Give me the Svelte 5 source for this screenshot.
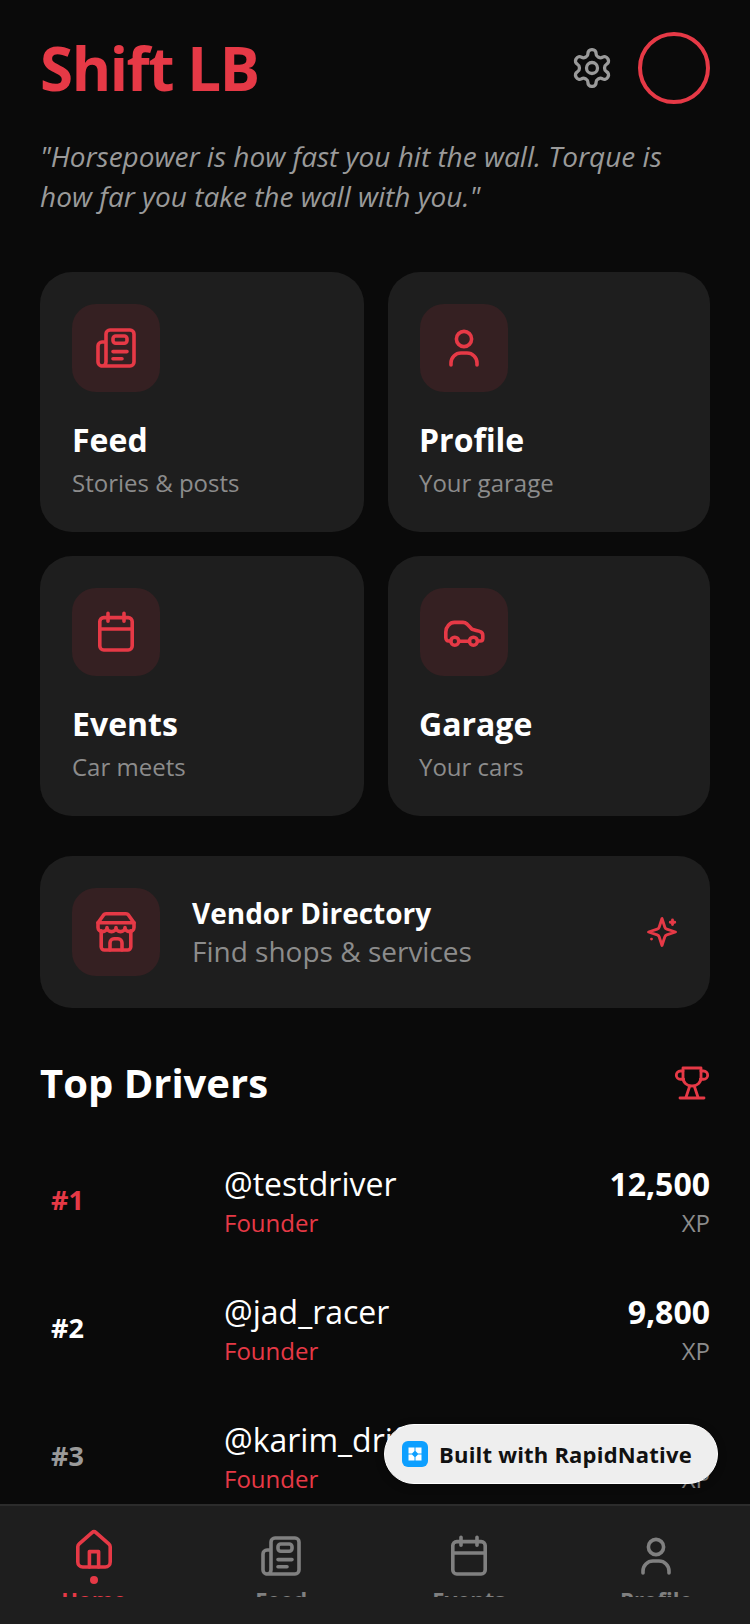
<script>
  const cards = [
    { title: 'Feed', sub: 'Stories & posts', icon: 'news' },
    { title: 'Profile', sub: 'Your garage', icon: 'user' },
    { title: 'Events', sub: 'Car meets', icon: 'cal' },
    { title: 'Garage', sub: 'Your cars', icon: 'car' }
  ];
  const drivers = [
    { rank: '#1', name: '@testdriver', xp: '12,500', cls: 'first' },
    { rank: '#2', name: '@jad_racer', xp: '9,800', cls: 'second' },
    { rank: '#3', name: '@karim_drift', xp: '7,650', cls: 'third' }
  ];
  const tabs = [
    { label: 'Home', icon: 'home', active: true },
    { label: 'Feed', icon: 'news' },
    { label: 'Events', icon: 'cal' },
    { label: 'Profile', icon: 'user' }
  ];
</script>

{#snippet glyph(name)}
  <svg class="ico" viewBox="0 0 24 24" fill="none" stroke="currentColor" stroke-width="1.8" stroke-linecap="round" stroke-linejoin="round">
    {#if name === 'news'}
      <path d="M4.5 21H19a2 2 0 0 0 2-2V5a2 2 0 0 0-2-2H9a2 2 0 0 0-2 2v14a2 2 0 0 1-2 2 2 2 0 0 1-2-2v-8a2 2 0 0 1 2-2h2" />
      <rect x="10.5" y="6" width="7" height="3.6" rx="1.4" />
      <path d="M10.5 13.8h7M10.5 17.4h4.5" />
    {:else if name === 'user'}
      <circle cx="12" cy="7.5" r="3.8" />
      <path d="M5.500 20.500v-1a5 5 0 0 1 5-5h3a5 5 0 0 1 5 5v1" />
    {:else if name === 'cal'}
      <rect x="3.900" y="4.800" width="16.200" height="16.200" rx="2" />
      <path d="M3.900 10.500h16.200M8 2.600v4M16 2.600v4" />
    {:else if name === 'car'}
      <path d="M19 16.500h1.200c.8 0 1.200-.5 1.200-1.200v-1.600c0-1-.6-1.800-1.500-2C18.300 11.200 16 10.600 16 10.600s-1.500-1.600-2.500-2.600c-.6-.5-1.200-.8-2-.8H7.200C5 7.200 2.900 9.400 2.900 12v2.800c0 1 .6 1.700 1.400 1.700H5.400" />
      <circle cx="7.400" cy="16.600" r="2" />
      <path d="M9.400 16.600h5.300" />
      <circle cx="16.700" cy="16.600" r="2" />
    {:else if name === 'store'}
      <path d="M7 2.900h10c.6 0 1 .3 1.300.7L21 7.400v2.400a2.250 2 0 0 1-4.500 0 2.250 2 0 0 1-4.500 0 2.250 2 0 0 1-4.500 0 2.250 2 0 0 1-4.500 0V7.400l2.700-3.800c.3-.4.7-.7 1.300-.7z" />
      <path d="M3 7.400h18" />
      <path d="M4.600 11.400V19.500A1.600 1.600 0 0 0 6.200 21h11.600a1.600 1.600 0 0 0 1.600-1.500v-8.100" />
      <path d="M9 21v-3.600a2 2 0 0 1 2-2h2a2 2 0 0 1 2 2V21" />
    {:else if name === 'home'}
      <path d="M4.600 8.900 11 3.300a1.500 1.500 0 0 1 2 0l6.400 5.600a2 2 0 0 1 .7 1.500V18a2.500 2.500 0 0 1-2.500 2.500H6.400A2.500 2.500 0 0 1 3.900 18v-7.600a2 2 0 0 1 .7-1.500z" />
      <path d="M9.700 20.500V12.800h4.600v7.700" />
    {/if}
  </svg>
{/snippet}

<div class="screen">
  <main class="scroll">
    <header class="top">
      <h1>Shift LB</h1>
      <div class="top-actions">
        <svg class="gear" viewBox="0 0 24 24" fill="none" stroke="currentColor" stroke-width="1.8" stroke-linecap="round" stroke-linejoin="round">
          <path d="M12.220 2h-.44a2 2 0 0 0-2 2v.18a2 2 0 0 1-1 1.730l-.43.25a2 2 0 0 1-2 0l-.15-.08a2 2 0 0 0-2.730.73l-.22.38a2 2 0 0 0 .73 2.730l.15.1a2 2 0 0 1 1 1.720v.51a2 2 0 0 1-1 1.740l-.15.09a2 2 0 0 0-.73 2.730l.22.38a2 2 0 0 0 2.730.73l.15-.08a2 2 0 0 1 2 0l.43.25a2 2 0 0 1 1 1.730V20a2 2 0 0 0 2 2h.44a2 2 0 0 0 2-2v-.18a2 2 0 0 1 1-1.730l.43-.25a2 2 0 0 1 2 0l.15.08a2 2 0 0 0 2.730-.73l.22-.39a2 2 0 0 0-.73-2.730l-.15-.08a2 2 0 0 1-1-1.740v-.5a2 2 0 0 1 1-1.740l.15-.09a2 2 0 0 0 .73-2.730l-.22-.38a2 2 0 0 0-2.730-.73l-.15.08a2 2 0 0 1-2 0l-.43-.25a2 2 0 0 1-1-1.730V4a2 2 0 0 0-2-2z" />
          <circle cx="12" cy="12" r="3" />
        </svg>
        <div class="avatar"></div>
      </div>
    </header>

    <p class="quote">"Horsepower is how fast you hit the wall. Torque is how far you take the wall with you."</p>

    <section class="grid">
      {#each cards as c}
        <article class="card">
          <div class="tile">{@render glyph(c.icon)}</div>
          <h2>{c.title}</h2>
          <p>{c.sub}</p>
        </article>
      {/each}
    </section>

    <section class="vendor">
      <div class="tile">{@render glyph('store')}</div>
      <div class="vendor-text">
        <h3>Vendor Directory</h3>
        <p>Find shops &amp; services</p>
      </div>
      <svg class="spark" viewBox="0 0 24 24" fill="none" stroke="currentColor" stroke-width="1.9" stroke-linecap="round" stroke-linejoin="round">
        <path d="m12 3-1.900 5.800a2 2 0 0 1-1.300 1.300L3 12l5.800 1.900a2 2 0 0 1 1.300 1.300L12 21l1.900-5.800a2 2 0 0 1 1.300-1.300L21 12l-5.800-1.900a2 2 0 0 1-1.300-1.300L12 3Z" />
        <path d="M19 4v3M17.500 5.500h3M5 16.700h.01" />
      </svg>
    </section>

    <div class="section-head">
      <h2>Top Drivers</h2>
      <svg class="trophy" viewBox="0 0 24 24" fill="none" stroke="currentColor" stroke-width="1.9" stroke-linecap="round" stroke-linejoin="round">
        <path d="M6 2h12v6.500c0 3.300-2.700 5.500-6 5.500s-6-2.200-6-5.500V2z" />
        <path d="M6 4H4.300a2.400 2.400 0 0 0 0 5.500H6.400M18 4h1.700a2.400 2.400 0 0 1 0 5.500h-2.100" />
        <path d="M10.500 14 8 21.500M13.500 14 16 21.500M4 22h16" />
      </svg>
    </div>

    <ul class="drivers">
      {#each drivers as d}
        <li>
          <span class="rank {d.cls}">{d.rank}</span>
          <div class="who">
            <span class="name">{d.name}</span>
            <span class="role">Founder</span>
          </div>
          <div class="score">
            <strong>{d.xp}</strong>
            <span>XP</span>
          </div>
        </li>
      {/each}
    </ul>
  </main>

  <nav class="tabs">
    {#each tabs as t}
      <div class="tab" class:active={t.active}>
        {@render glyph(t.icon)}
        {#if t.active}<i class="dot"></i>{/if}
        <span>{t.label}</span>
      </div>
    {/each}
  </nav>

  <div class="badge">
    <svg class="logo" viewBox="0 0 26 26">
      <rect width="26" height="26" rx="6" fill="#0d9fff" />
      <path d="M6.500 6.500h6V10L10 12.500H6.500zM13.500 6.500h6v6H16L13.500 10zM6.500 13.500H10l2.500 2.500v3.500h-6zM16 13.500h3.500v6h-6V16z" fill="#fff" />
    </svg>
    <span>Built with RapidNative</span>
  </div>
</div>

<style>
  :global(body) {
    margin: 0;
    background: #0a0a0a;
  }
  .screen {
    position: relative;
    width: 750px;
    height: 1624px;
    display: flex;
    flex-direction: column;
    overflow: hidden;
    background: #0a0a0a;
    font-family: "Open Sans", sans-serif;
    color: #fff;
  }
  .scroll {
    flex: 1;
    min-height: 0;
    overflow: hidden;
    padding: 0 40px;
  }
  h1, h2, h3, p, ul {
    margin: 0;
    padding: 0;
  }
  .top {
    display: flex;
    align-items: center;
    justify-content: space-between;
    padding-top: 32px;
  }
  h1 {
    font-size: 60px;
    line-height: 72px;
    font-weight: 700;
    letter-spacing: -1.4px;
    color: #e63946;
  }
  .top-actions {
    display: flex;
    align-items: center;
    gap: 24px;
  }
  .gear {
    display: block;
    width: 44px;
    height: 44px;
    color: #9a9a9a;
  }
  .avatar {
    box-sizing: border-box;
    width: 72px;
    height: 72px;
    border-radius: 50%;
    border: 4px solid #e63946;
  }
  .quote {
    margin-top: 32px;
    font-size: 28px;
    line-height: 40px;
    font-style: italic;
    color: #9a9a9a;
  }
  .grid {
    margin-top: 56px;
    display: grid;
    grid-template-columns: 324px 322px;
    gap: 24px;
  }
  .card {
    box-sizing: border-box;
    height: 260px;
    padding: 32px;
    border-radius: 32px;
    background: #1e1e1e;
  }
  .card:nth-child(even) h2,
  .card:nth-child(even) p {
    margin-left: -1px;
  }
  .tile {
    width: 88px;
    height: 88px;
    flex: none;
    border-radius: 24px;
    background: #352022;
    color: #e63946;
    display: flex;
    align-items: center;
    justify-content: center;
  }
  .ico {
    display: block;
    width: 48px;
    height: 48px;
    flex: none;
  }
  .card h2 {
    margin-top: 26px;
    font-size: 32px;
    line-height: 44px;
    font-weight: 700;
  }
  .card p {
    margin-top: 3px;
    font-size: 24px;
    line-height: 36px;
    color: #8c8c8c;
  }
  .vendor {
    margin-top: 40px;
    box-sizing: border-box;
    height: 152px;
    padding: 0 32px;
    border-radius: 32px;
    background: #1e1e1e;
    display: flex;
    align-items: center;
    gap: 32px;
  }
  .vendor-text {
    flex: 1;
  }
  .vendor h3 {
    font-size: 28px;
    line-height: 38px;
    font-weight: 700;
  }
  .vendor p {
    font-size: 28px;
    line-height: 38px;
    color: #8c8c8c;
  }
  .spark {
    display: block;
    width: 36px;
    height: 36px;
    color: #e63946;
    margin-right: -2px;
  }
  .section-head {
    margin-top: 47px;
    display: flex;
    align-items: center;
    justify-content: space-between;
  }
  .section-head h2 {
    font-size: 40px;
    line-height: 56px;
    font-weight: 700;
  }
  .trophy {
    display: block;
    width: 36px;
    height: 36px;
    color: #e63946;
  }
  .drivers {
    list-style: none;
    margin-top: 27px;
  }
  .drivers li {
    height: 128px;
    display: flex;
    align-items: center;
  }
  .rank {
    width: 184px;
    padding-left: 11px;
    margin-bottom: 6px;
    box-sizing: border-box;
    flex: none;
    font-size: 27px;
    font-weight: 700;
  }
  .rank.first { color: #e63946; }
  .rank.second { color: #fff; }
  .rank.third { color: #9a9a9a; }
  .who {
    flex: 1;
    display: flex;
    flex-direction: column;
  }
  .name {
    font-size: 32px;
    line-height: 42px;
  }
  .role {
    font-size: 24px;
    line-height: 36px;
    color: #e63946;
  }
  .score {
    display: flex;
    flex-direction: column;
    align-items: flex-end;
  }
  .score strong {
    font-size: 32px;
    line-height: 42px;
    font-weight: 700;
  }
  .score span {
    font-size: 24px;
    line-height: 36px;
    color: #8c8c8c;
  }
  .tabs {
    flex: none;
    box-sizing: border-box;
    height: 120px;
    background: #1e1e1e;
    border-top: 2px solid #2c2c2c;
    display: grid;
    grid-template-columns: repeat(4, 1fr);
  }
  .tab {
    box-sizing: border-box;
    height: 91px;
    padding-top: 26px;
    overflow: hidden;
    display: flex;
    flex-direction: column;
    align-items: center;
    color: #808080;
  }
  .tab .ico {
    margin-bottom: 4px;
  }
  .tab.active {
    padding-top: 20px;
    color: #e63946;
  }
  .tab.active .ico {
    margin-bottom: 2px;
  }
  .dot {
    display: block;
    flex: none;
    width: 8px;
    height: 8px;
    border-radius: 50%;
    background: #e63946;
  }
  .tab span {
    flex: none;
    font-size: 22px;
    line-height: 30px;
    font-weight: 700;
  }
  .badge {
    position: absolute;
    left: 384px;
    top: 1424px;
    box-sizing: border-box;
    width: 334px;
    height: 60px;
    border-radius: 30px;
    background: #eeeeee;
    border: 1px solid #fff;
    box-shadow: 0 2px 8px rgba(0, 0, 0, 0.3);
    display: flex;
    align-items: center;
    gap: 11px;
    padding-left: 17px;
  }
  .logo {
    display: block;
    width: 26px;
    height: 26px;
    flex: none;
  }
  .badge span {
    font-size: 22px;
    letter-spacing: 0.2px;
    font-weight: 700;
    color: #111;
    white-space: nowrap;
  }
</style>
